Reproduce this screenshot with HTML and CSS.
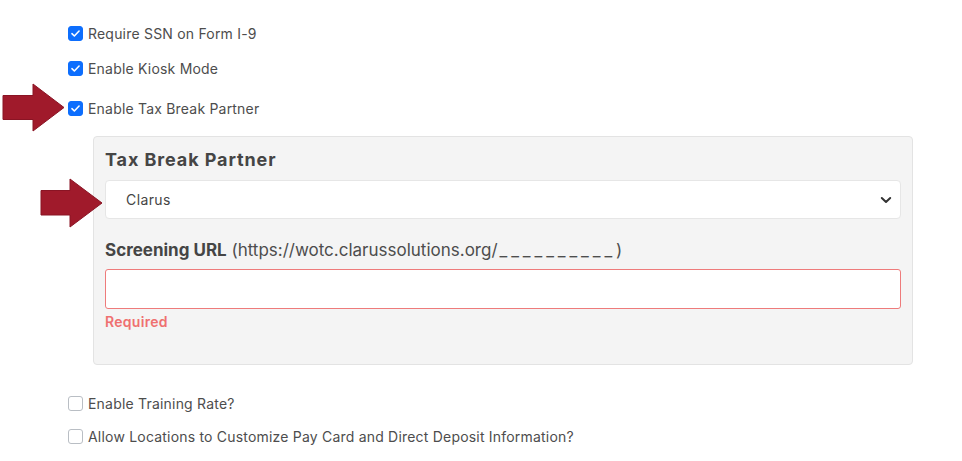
FILE: index.html
```html
<!DOCTYPE html>
<html>
<head>
<meta charset="utf-8">
<link rel="stylesheet" href="styles.css">
</head>
<body>
<div class="page">
  <label class="check-row r1"><span class="box on"><svg viewBox="0 0 16 16" width="15" height="15"><path d="M3.6 8.2 L6.6 11.1 L12.4 4.9" fill="none" stroke="#fff" stroke-width="1.9" stroke-linecap="round" stroke-linejoin="round"/></svg></span><span class="lbl">Require SSN on Form I-9</span></label>
  <label class="check-row r2"><span class="box on"><svg viewBox="0 0 16 16" width="15" height="15"><path d="M3.6 8.2 L6.6 11.1 L12.4 4.9" fill="none" stroke="#fff" stroke-width="1.9" stroke-linecap="round" stroke-linejoin="round"/></svg></span><span class="lbl">Enable Kiosk Mode</span></label>
  <label class="check-row r3"><span class="box on"><svg viewBox="0 0 16 16" width="15" height="15"><path d="M3.6 8.2 L6.6 11.1 L12.4 4.9" fill="none" stroke="#fff" stroke-width="1.9" stroke-linecap="round" stroke-linejoin="round"/></svg></span><span class="lbl">Enable Tax Break Partner</span>
    <svg class="arrow a1" width="66" height="50" viewBox="0 0 66 50"><path d="M3 12.5 H33 V1 L64 24.5 L33 48 V36.5 H3 Z" fill="#a01a2b" stroke="#8a1424" stroke-width="1"/></svg>
  </label>

  <div class="panel">
    <div class="field-title">Tax Break Partner</div>
    <div class="select">
      <span>Clarus</span>
      <svg width="12" height="12" viewBox="0 0 12 12"><path d="M1.8 4 L6 8 L10.2 4" fill="none" stroke="#333" stroke-width="2" stroke-linecap="round" stroke-linejoin="round"/></svg>
      <svg class="arrow a2" width="66" height="50" viewBox="0 0 66 50"><path d="M3 12.5 H32 V1 L64 25 L32 49 V37 H3 Z" fill="#a01a2b" stroke="#8a1424" stroke-width="1"/></svg>
    </div>
    <div class="url"><b>Screening URL</b> <span class="hint">(https://wotc.clarussolutions.org/<span class="blanks">__________</span>)</span></div>
    <div class="input"></div>
    <div class="error">Required</div>
  </div>

  <label class="check-row r4"><span class="box"></span><span class="lbl">Enable Training Rate?</span></label>
  <label class="check-row r5"><span class="box"></span><span class="lbl">Allow Locations to Customize Pay Card and Direct Deposit Information?</span></label>
</div>
</body>
</html>
```

FILE: styles.css
```css
* { box-sizing: border-box; }
html, body { margin: 0; padding: 0; background: #fff; }
body {
  font-family: "Inter", "Open Sans", sans-serif;
  color: #4d4d4d;
  width: 962px;
  height: 461px;
  overflow: hidden;
}
.page {
  padding: 25px 0 0 68px;
  display: flex;
  flex-direction: column;
}
.check-row {
  position: relative;
  display: flex;
  align-items: center;
  gap: 5px;
  height: 16px;
  font-size: 14px;
  letter-spacing: 0.2px;
}
.r2 { margin-top: 19px; }
.r3 { margin-top: 24px; }
.r5 { margin-top: 17px; }
.box {
  width: 15px;
  height: 15px;
  border: 1px solid #b9bec4;
  border-radius: 3px;
  background: #fff;
  display: flex;
  align-items: center;
  justify-content: center;
  flex: none;
}
.box.on {
  background: #0d6efd;
  border-color: #0d6efd;
}
.box.on svg { display: block; }
.arrow { position: absolute; }
.a1 { left: -68px; top: -17px; }
.a2 { left: -68px; top: -3px; }
.panel {
  margin: 20px 49px 0 25px;
  background: #f4f4f4;
  border: 1px solid #e3e3e3;
  border-radius: 4px;
  padding: 13px 11px 34px 11px;
  height: 229px;
}
.field-title {
  font-size: 18px;
  font-weight: 700;
  color: #454545;
  height: 20px;
  line-height: 20px;
  letter-spacing: 0.9px;
}
.select {
  position: relative;
  margin-top: 10px;
  height: 39px;
  background: #fff;
  border: 1px solid #e6e6e6;
  border-radius: 4px;
  display: flex;
  align-items: center;
  justify-content: space-between;
  padding: 0 8px 0 20px;
  font-size: 14px;
  color: #454545;
  letter-spacing: 0.4px;
}
.url {
  margin-top: 21px;
  font-size: 17px;
  height: 20px;
  line-height: 20px;
  color: #454545;
}
.url b { font-weight: 700; }
.url .hint { font-weight: 400; color: #4d4d4d; }
.blanks { letter-spacing: 3.9px; margin-left: 2px; }
.input {
  margin-top: 9px;
  height: 40px;
  background: #fff;
  border: 1px solid #ee7b7b;
  border-radius: 3px;
}
.error {
  margin-top: 4px;
  font-size: 14px;
  font-weight: 600;
  color: #ef7070;
  letter-spacing: 0.3px;
}
.r4 { margin-top: 30px; }
```
